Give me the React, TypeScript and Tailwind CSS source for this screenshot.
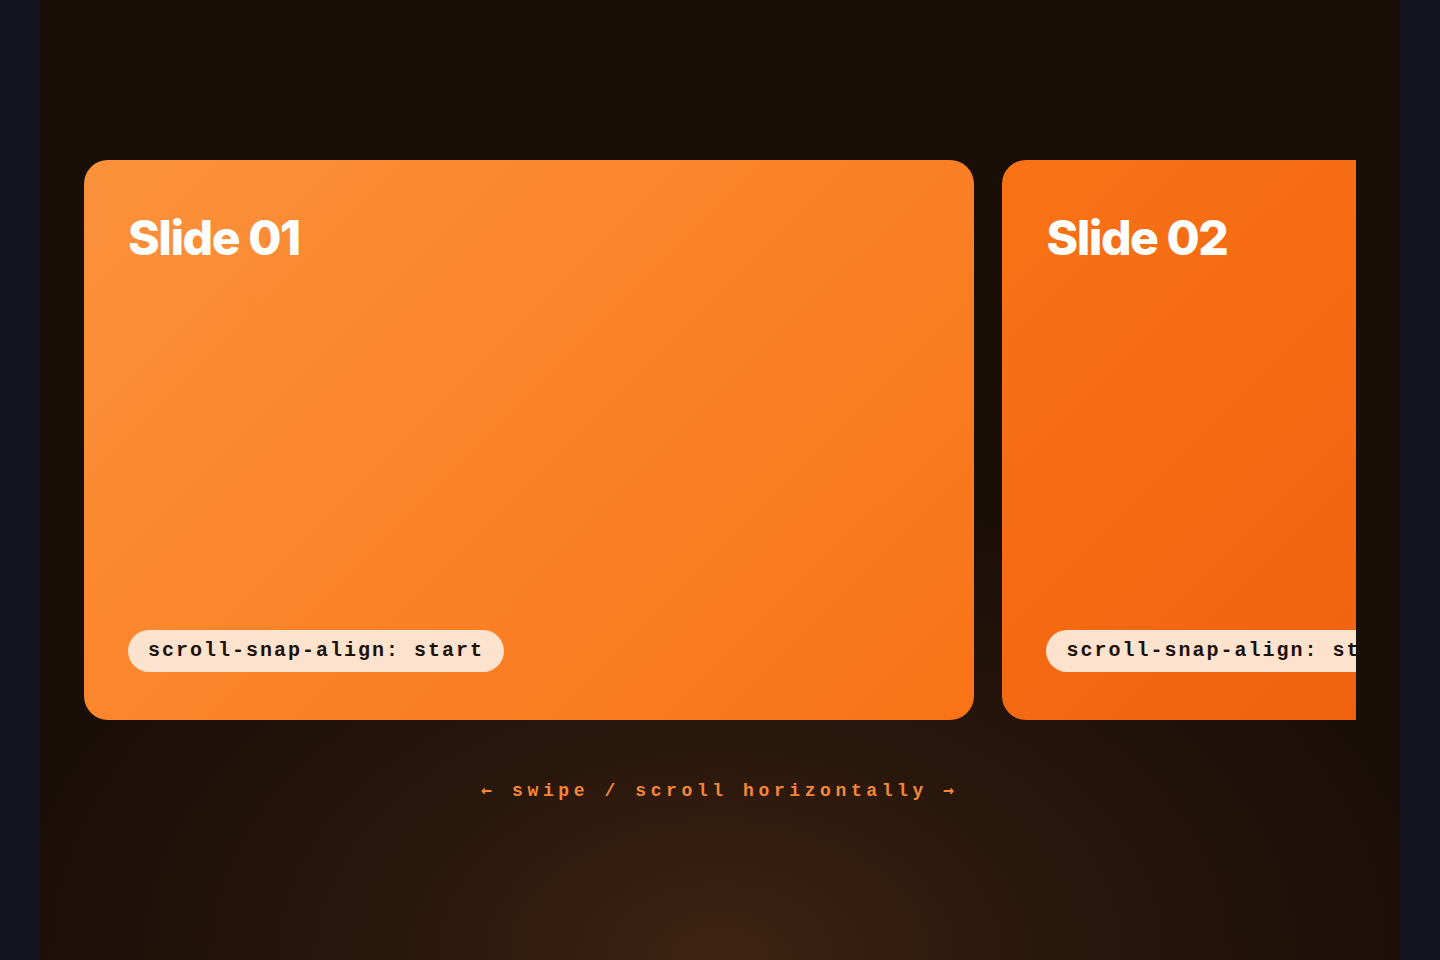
import React from "react";

const slides = [
  { n: "01", cls: "bg-[linear-gradient(135deg,#fb923c_0%,#f97316_100%)]" },
  { n: "02", cls: "bg-[linear-gradient(135deg,#f97316_0%,#ea580c_100%)]" },
  { n: "03", cls: "bg-[linear-gradient(135deg,#ea580c_0%,#c2410c_100%)]" },
  { n: "04", cls: "bg-[linear-gradient(135deg,#fb923c_0%,#ea580c_100%)]" },
];

export default function App() {
  return (
    <div className="min-h-[960px] w-full bg-[#13141f] flex justify-center">
      <div className="w-[1360px] h-[960px] overflow-hidden bg-[#1a0e08] bg-[radial-gradient(ellipse_720px_480px_at_50%_100%,#3f2311_0%,#2a170c_45%,#1a0e08_100%)] px-11 pt-40 flex flex-col">
        <div className="flex gap-7 overflow-x-auto snap-x snap-mandatory [scrollbar-width:none]">
          {slides.map((s) => (
            <div
              key={s.n}
              className={`snap-start shrink-0 w-[70%] h-[560px] rounded-3xl ${s.cls} px-11 pt-11 pb-12 flex flex-col justify-between`}
            >
              <h2 className="font-['Inter',sans-serif] font-extrabold text-[48px] leading-none tracking-[-0.03em] text-white mt-[10px]">
                Slide {s.n}
              </h2>
              <div>
                <span className="inline-flex items-center h-[42px] px-5 rounded-full bg-[#fde2cd] text-[#1c1109] font-['Liberation_Mono',monospace] font-bold text-[20px] tracking-[2px] whitespace-nowrap">
                  scroll-snap-align: start
                </span>
              </div>
            </div>
          ))}
        </div>
        <p className="mt-[56px] text-center font-['Liberation_Mono',monospace] text-[18px] tracking-[4.6px] text-[#f5873a] font-bold">
          <span className="font-['DejaVu_Sans_Mono',monospace]">←</span> swipe / scroll horizontally{" "}
          <span className="font-['DejaVu_Sans_Mono',monospace]">→</span>
        </p>
      </div>
    </div>
  );
}
